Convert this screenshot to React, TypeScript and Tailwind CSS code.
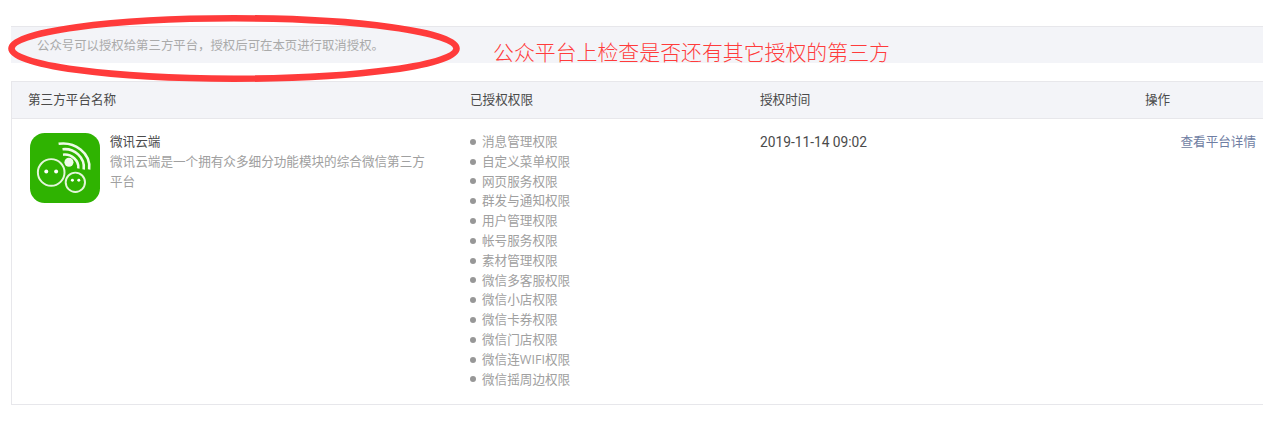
const cjk = "font-['Open_Sans','Noto_Sans_CJK_SC',sans-serif]";

const permissions = [
  "消息管理权限",
  "自定义菜单权限",
  "网页服务权限",
  "群发与通知权限",
  "用户管理权限",
  "帐号服务权限",
  "素材管理权限",
  "微信多客服权限",
  "微信小店权限",
  "微信卡券权限",
  "微信门店权限",
  "微信连WIFI权限",
  "微信摇周边权限",
];

function AppIcon() {
  return (
    <svg viewBox="0 0 71 71" className="w-[70px] h-[70px] shrink-0">
      <rect width="71" height="71" rx="15" fill="#2fb301" />
      <circle cx="21.5" cy="40" r="13.5" fill="none" stroke="#e4f6db" strokeWidth="2" />
      <circle cx="46" cy="50" r="9.8" fill="none" stroke="#e4f6db" strokeWidth="2" />
      <circle cx="16.5" cy="39" r="2" fill="#fff" />
      <circle cx="26.5" cy="39" r="2" fill="#fff" />
      <circle cx="43" cy="48" r="1.5" fill="#fff" />
      <circle cx="49.5" cy="48" r="1.5" fill="#fff" />
      <circle cx="39.5" cy="29.7" r="4.6" fill="#eefbe8" />
      <path d="M33.5 22C42 21 50 28 49 36" fill="none" stroke="#eefbe8" strokeWidth="2.6" />
      <path d="M33 16.5C45 15 56 25 54.5 37" fill="none" stroke="#eefbe8" strokeWidth="2.6" />
      <path d="M29 11C45 8.5 62 20 60 37" fill="none" stroke="#eefbe8" strokeWidth="2.6" />
    </svg>
  );
}

export default function App() {
  return (
    <div className={`relative h-[426px] w-[1263px] overflow-hidden bg-white pt-[26px] pl-[11px] ${cjk}`}>
      <div className="h-[37px] border-t border-[#e7e7eb] bg-[#f3f4f8] pl-[26px] pt-[10px] text-[12.4px] leading-[17px] text-[#aaaaaa]">
        {"公众号可以授权给第三方平台\uFF0C授权后可在本页进行取消授权\u3002"}
      </div>

      <div className="mt-[18px] h-[324px] border border-r-0 border-[#e7e7eb] text-[12.6px]">
        <div className="grid h-[37px] grid-cols-[442px_290px_385px_1fr] items-center border-b border-[#e7e7eb] bg-[#f3f4f8] pl-[16px] text-[#4a4a4a]">
          <div>第三方平台名称</div>
          <div>已授权权限</div>
          <div>授权时间</div>
          <div>操作</div>
        </div>
        <div className="grid grid-cols-[442px_289px_1fr] pl-[17px] pt-[14px]">
          <div className="flex gap-[10px] pl-px">
            <AppIcon />
            <div className="-mt-px w-[320px] leading-[20px]">
              <div className="text-[#4a4a4a]">微讯云端</div>
              <div className="text-[#a0a0a0]">微讯云端是一个拥有众多细分功能模块的综合微信第三方平台</div>
            </div>
          </div>
          <ul className="-mt-px -ml-[1px] leading-[19.8px] text-[#a0a0a0]">
            {permissions.map((p) => (
              <li key={p} className="flex items-center gap-[6px]">
                <span className="h-[6px] w-[6px] rounded-full bg-[#979797]" />
                {p}
              </li>
            ))}
          </ul>
          <div className="-mt-px flex justify-between pr-[7px] leading-[20px]">
            <span className="font-['Roboto'] text-[13.75px] text-[#4a4a4a]">2019-11-14 09:02</span>
            <a className="text-[#6f7ea3]">查看平台详情</a>
          </div>
        </div>
      </div>

      <svg className="absolute left-0 top-0 h-[90px] w-[470px]" viewBox="0 0 470 90">
        <ellipse cx="234" cy="48.5" rx="222.5" ry="30.2" fill="none" stroke="#ff3b3b" strokeWidth="6.6" />
      </svg>
      <div className="absolute left-[493px] top-[38px] text-[20.9px] leading-[28px] font-light text-[#ff3b3b]">
        公众平台上检查是否还有其它授权的第三方
      </div>
    </div>
  );
}
